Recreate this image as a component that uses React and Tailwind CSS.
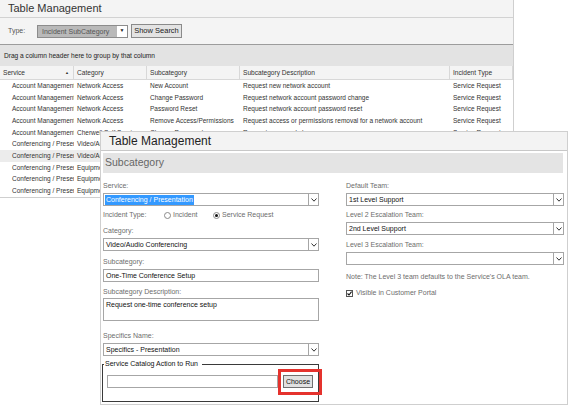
import React from "react";

const rows = [
  ["Account Management", "Network Access", "New Account", "Request new network account", "Service Request"],
  ["Account Management", "Network Access", "Change Password", "Request network account password change", "Service Request"],
  ["Account Management", "Network Access", "Password Reset", "Request network account password reset", "Service Request"],
  ["Account Management", "Network Access", "Remove Access/Permissions", "Request access or permissions removal for a network account", "Service Request"],
  ["Account Management", "Cherwell Self Service", "Change Password", "Request password change", "Service Request"],
  ["Conferencing / Presentation", "Video/Audio Conferencing", "One-Time Conference Setup", "Request one-time conference setup", "Service Request"],
  ["Conferencing / Presentation", "Video/Audio Conferencing", "Recurring Conference Setup", "Request recurring conference setup", "Service Request"],
  ["Conferencing / Presentation", "Equipment", "Projector", "Request projector", "Service Request"],
  ["Conferencing / Presentation", "Equipment", "Speaker Phone", "Request speaker phone", "Service Request"],
  ["Conferencing / Presentation", "Equipment", "Laptop", "Request laptop", "Service Request"],
];

const colWidths = ["w-[74px]", "w-[73px]", "w-[93px]", "w-[210px]", "w-[63px]"];

const Chevron = () => (
  <svg width="6" height="4" viewBox="0 0 6 4">
    <path d="M0.5 0.5 L3 3.2 L5.5 0.5" fill="none" stroke="#333" strokeWidth="1" />
  </svg>
);

const Label = ({ children, className = "" }) => (
  <div className={`h-[12px] text-[7px] leading-[12px] text-[#6d6d6d] whitespace-nowrap ${className}`}>
    {children}
  </div>
);

const Select = ({ value, highlight = false, className = "" }) => (
  <div className={`h-[13px] border border-[#a6a6a6] bg-white flex items-stretch ${className}`}>
    <div className="flex-1 flex items-center pl-[1px] overflow-hidden">
      {highlight ? (
        <span className="bg-[#3399ff] text-white text-[7px] leading-[10px] px-[1px]">{value}</span>
      ) : (
        <span className="text-[#111] text-[7px] leading-[10px] px-[1px]">{value}</span>
      )}
    </div>
    <div className="w-[10px] border-l border-[#a6a6a6] flex items-center justify-center">
      <Chevron />
    </div>
  </div>
);

const Radio = ({ checked }) => (
  <span className="w-[7px] h-[7px] rounded-full border border-[#8a8a8a] bg-white flex items-center justify-center">
    {checked && <span className="w-[3px] h-[3px] rounded-full bg-[#111]" />}
  </span>
);

function BackWindow() {
  return (
    <div className="absolute left-0 top-0 w-[514px] h-[198px] border-r border-b border-[#cfcfcf] bg-white flex flex-col overflow-hidden">
      <div className="h-[18px] shrink-0 bg-[#f4f4f4] border-b border-[#d2d2d2] pl-[8px] text-[11px] leading-[17px] text-[#333]">
        Table Management
      </div>
      <div className="h-[27px] shrink-0 bg-[#f4f4f4] border-b border-[#9c9c9c] flex items-center pl-[8px]">
        <span className="w-[29px] text-[7px] text-[#555]">Type:</span>
        <div className="w-[91px] h-[13px] border border-[#8c8c8c] flex">
          <div className="flex-1 bg-[#b9b9b9] text-[#555] text-[7px] leading-[11px] pl-[4px]">Incident SubCategory</div>
          <div className="w-[10px] bg-white flex items-center justify-center text-[5px] text-[#222]">▼</div>
        </div>
        <button className="ml-[3px] w-[51px] h-[14px] border border-[#8a8a8a] bg-[#e3e3e3] text-[7.5px] text-[#222] leading-[12px]">
          Show Search
        </button>
      </div>
      <div className="h-[21px] shrink-0 bg-[#e3e3e3] flex items-center pl-[4px] text-[6.6px] text-[#222]">
        Drag a column header here to group by that column
      </div>
      <div className="h-[14px] shrink-0 bg-[#f4f4f4] border-b border-[#d8d8d8] flex text-[6.6px] text-[#333]">
        {["Service", "Category", "Subcategory", "Subcategory Description", "Incident Type"].map((h, i) => (
          <div
            key={h}
            className={`${colWidths[i]} shrink-0 border-r border-[#d8d8d8] flex items-center justify-between pl-[3px] pr-[4px] whitespace-nowrap`}
          >
            <span>{h}</span>
            {i === 0 && <span className="text-[4px]">▲</span>}
          </div>
        ))}
      </div>
      {rows.map((r, ri) => (
        <div
          key={ri}
          className={`h-[11.67px] shrink-0 flex text-[6.5px] text-[#333] leading-[11.67px] ${ri === 6 ? "bg-[#ececec]" : ""}`}
        >
          {r.map((c, ci) => (
            <div
              key={ci}
              className={`${colWidths[ci]} shrink-0 overflow-hidden whitespace-nowrap ${ci === 0 ? "pl-[12px]" : "pl-[3px]"}`}
            >
              {c}
            </div>
          ))}
        </div>
      ))}
    </div>
  );
}

function FrontWindow() {
  return (
    <div className="absolute left-[100px] top-[131px] w-[468px] h-[274px] border border-[#cfcfcf] bg-white flex flex-col">
      <div className="h-[19px] shrink-0 bg-[#f3f3f3] border-b border-[#c8c8c8] pl-[8px] text-[12px] leading-[18px] text-[#222]">
        Table Management
      </div>
      <div className="mt-[2px] ml-[2px] mr-[4px] h-[20px] shrink-0 bg-[#e4e4e4] flex items-center pl-[2px] text-[10.5px] text-[#666]">
        Subcategory
      </div>
      <div className="flex pl-[2px] pt-[7px]">
        {/* left column */}
        <div className="w-[216px] flex flex-col">
          <Label>Service:</Label>
          <Select className="mt-[1px]" value="Conferencing / Presentation" highlight />
          <div className="mt-[3px] h-[12px] flex items-center text-[7px] text-[#6d6d6d]">
            <span className="w-[61px]">Incident Type:</span>
            <Radio />
            <span className="ml-[2px] w-[40px]">Incident</span>
            <Radio checked />
            <span className="ml-[2px]">Service Request</span>
          </div>
          <Label className="mt-[4px]">Category:</Label>
          <Select className="mt-[1px]" value="Video/Audio Conferencing" />
          <Label className="mt-[5px]">Subcategory:</Label>
          <div className="mt-[1px] h-[13px] border border-[#a6a6a6] text-[7px] leading-[11px] text-[#111] pl-[2px]">
            One-Time Conference Setup
          </div>
          <Label className="mt-[4px]">Subcategory Description:</Label>
          <div className="h-[23px] border border-[#a6a6a6] text-[7px] leading-[11px] text-[#111] pl-[2px]">
            Request one-time conference setup
          </div>
          <Label className="mt-[9px]">Specifics Name:</Label>
          <Select className="mt-[1px]" value="Specifics - Presentation" />
          <fieldset className="mt-[3px] -ml-[1px] w-[217px] h-[43px] border border-[#3a3a3a] pl-[1px]">
            <legend className="pl-[1px] pr-[4px] text-[7px] leading-[10px] text-[#111]">
              Service Catalog Action to Run
            </legend>
            <div className="flex items-center pl-[3px] pt-[6px]">
              <div className="w-[171px] h-[13px] border border-[#a6a6a6] bg-white" />
              <span className="relative ml-[5px] flex">
                <button className="w-[30px] h-[13px] border border-[#707070] bg-[#e1e1e1] text-[7px] leading-[11px] text-[#111]">
                  Choose
                </button>
                <span className="absolute -left-[5px] -right-[9px] -top-[6px] -bottom-[7px] border-[3px] border-[#e5322d]" />
              </span>
            </div>
          </fieldset>
        </div>
        {/* right column */}
        <div className="ml-[27px] w-[218px] flex flex-col">
          <Label>Default Team:</Label>
          <Select className="mt-[1px] h-[12px]" value="1st Level Support" />
          <Label className="mt-[3px]">Level 2 Escalation Team:</Label>
          <Select className="mt-[1px] h-[12px]" value="2nd Level Support" />
          <Label className="mt-[4px]">Level 3 Escalation Team:</Label>
          <Select className="mt-[1px] h-[12px]" value="" />
          <Label className="mt-[6px]">Note: The Level 3 team defaults to the Service's OLA team.</Label>
          <div className="mt-[4px] h-[12px] flex items-center text-[7px] text-[#6d6d6d]">
            <span className="w-[7px] h-[7px] border border-[#555] bg-white flex items-center justify-center">
              <svg width="5" height="5" viewBox="0 0 5 5">
                <path d="M0.5 2.5 L2 4 L4.6 0.6" fill="none" stroke="#111" strokeWidth="1.1" />
              </svg>
            </span>
            <span className="ml-[3px]">Visible in Customer Portal</span>
          </div>
        </div>
      </div>
    </div>
  );
}

export default function App() {
  return (
    <div className="relative w-[576px] h-[405px] bg-white overflow-hidden font-['Liberation_Sans',Arial,sans-serif]">
      <BackWindow />
      <FrontWindow />
    </div>
  );
}
